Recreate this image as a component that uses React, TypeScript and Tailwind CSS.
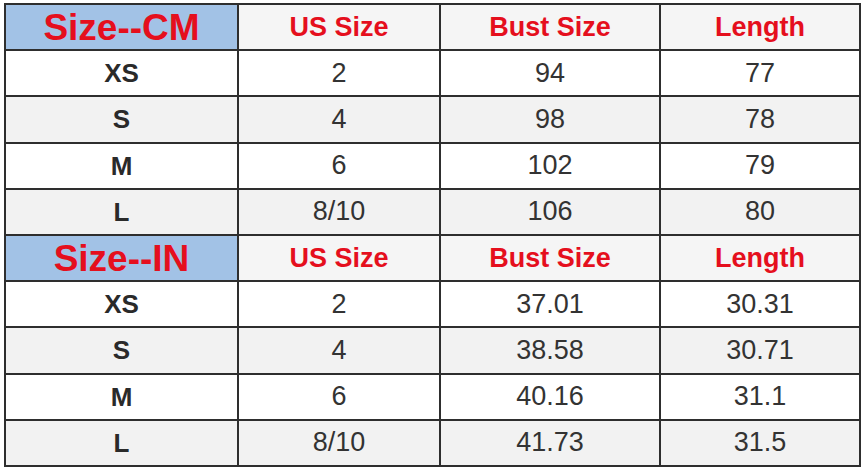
const sections = [
  {
    title: 'Size--CM',
    rows: [
      ['XS', '2', '94', '77'],
      ['S', '4', '98', '78'],
      ['M', '6', '102', '79'],
      ['L', '8/10', '106', '80'],
    ],
  },
  {
    title: 'Size--IN',
    rows: [
      ['XS', '2', '37.01', '30.31'],
      ['S', '4', '38.58', '30.71'],
      ['M', '6', '40.16', '31.1'],
      ['L', '8/10', '41.73', '31.5'],
    ],
  },
]

const heads = ['US Size', 'Bust Size', 'Length']

export default function App() {
  return (
    <div className="w-[862px] h-[469px] bg-white pt-[3px] pl-[4px] font-['Liberation_Sans',Arial,sans-serif]">
      <table className="table-fixed border-collapse border-2 border-[#2e2e2e] w-[855px]">
        <colgroup>
          <col className="w-[233px]" />
          <col className="w-[202px]" />
          <col className="w-[220px]" />
          <col className="w-[200px]" />
        </colgroup>
        <tbody>
          {sections.map((sec) => (
            <>
              <tr key={sec.title} className="h-[46.2px]">
                <td className="border-2 border-[#2e2e2e] bg-[#a2c2e6] text-center text-[37px] leading-none font-bold text-[#e50f1d]">
                  {sec.title}
                </td>
                {heads.map((h) => (
                  <td
                    key={h}
                    className="border-2 border-[#2e2e2e] bg-[#f5f5f5] text-center text-[27px] leading-none font-bold text-[#e50f1d]"
                  >
                    {h}
                  </td>
                ))}
              </tr>
              {sec.rows.map((r, i) => (
                <tr key={sec.title + r[0]} className={'h-[46.2px] ' + (i % 2 === 1 ? 'bg-[#f2f2f2]' : 'bg-white')}>
                  <td className="border-2 border-[#2e2e2e] text-center text-[26px] leading-none font-bold text-[#2a2a2a]">
                    {r[0]}
                  </td>
                  {r.slice(1).map((v, j) => (
                    <td
                      key={j}
                      className="border-2 border-[#2e2e2e] text-center text-[27px] leading-none text-[#333333]"
                    >
                      {v}
                    </td>
                  ))}
                </tr>
              ))}
            </>
          ))}
        </tbody>
      </table>
    </div>
  )
}
